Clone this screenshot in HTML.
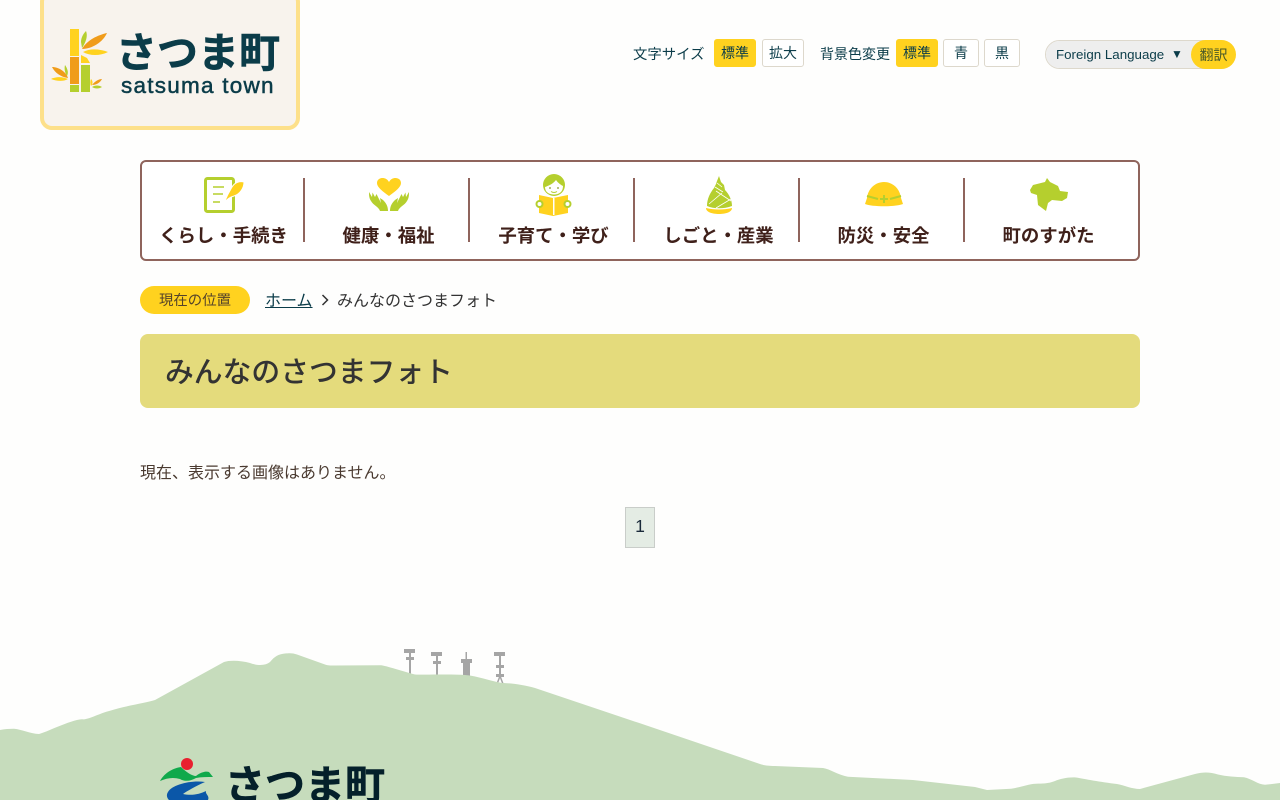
<!DOCTYPE html>
<html lang="ja"><head><meta charset="utf-8"><title>みんなのさつまフォト</title>
<style>
html,body{margin:0;padding:0;width:1280px;height:800px;overflow:hidden}
body{position:relative;background:#fefefd;font-family:"Liberation Sans","Noto Sans CJK JP",sans-serif;color:#333}
#w{position:absolute;left:0;top:0;width:1280px;height:800px;overflow:hidden}
.a{position:absolute;white-space:nowrap}
.c{text-align:center}
.btn{position:absolute;box-sizing:border-box;height:28px;top:39px;border-radius:3px;font-size:14px;line-height:27px;text-align:center;color:#0b3c49;border:1px solid #ddd8cc;background:#fff}
.btn.on{background:#ffd21f;border-color:#ffd21f;color:#0b3c49}
.nl{position:absolute;top:222px;width:165px;text-align:center;font-size:18.4px;line-height:28px;font-weight:700;color:#3f201a;white-space:nowrap}
.dv{position:absolute;top:178px;width:2px;height:64px;background:#8f645c}
svg{position:absolute;left:0;top:0}
</style></head><body><div id="w">

<div class="a" style="left:40px;top:-10px;width:260px;height:140px;box-sizing:border-box;background:#f8f3ed;border:4px solid #fde08a;border-radius:12px"></div>
<div class="a" style="left:116px;top:25px;font-size:41px;line-height:56px;font-weight:700;color:#0b3c49;-webkit-text-stroke:.6px #0b3c49">さつま町</div>
<div class="a" style="left:121px;top:72px;font-size:22.5px;line-height:28px;letter-spacing:1.25px;color:#0b3c49;-webkit-text-stroke:.5px #0b3c49">satsuma town</div>

<div class="a" style="left:633px;top:45px;font-size:14.4px;line-height:20px;color:#0b3c49">文字サイズ</div>
<div class="btn on" style="left:714px;width:42px">標準</div>
<div class="btn" style="left:762px;width:42px">拡大</div>
<div class="a" style="left:820px;top:44px;font-size:14px;line-height:20px;color:#0b3c49">背景色変更</div>
<div class="btn on" style="left:896px;width:42px">標準</div>
<div class="btn" style="left:943px;width:36px">青</div>
<div class="btn" style="left:984px;width:36px">黒</div>
<div class="a" style="left:1045px;top:40px;width:190px;height:29px;box-sizing:border-box;border:1px solid #ddd8cc;border-radius:15px;background:#fff"></div>
<div class="a" style="left:1046px;top:41px;width:165px;height:27px;border-radius:14px;background:#eee"></div>
<div class="a" style="left:1056px;top:45px;font-size:13.33px;line-height:19px;color:#0b3c49">Foreign Language</div>
<div class="a" style="left:1171px;top:45px;font-size:12px;line-height:19px;color:#0b3c49">▼</div>
<div class="a c" style="left:1191px;top:40px;width:45px;height:29px;border-radius:15px;background:#ffd21f;font-size:14px;line-height:31px;color:#4b5a28">翻訳</div>

<div class="a" style="left:140px;top:160px;width:1000px;height:101px;box-sizing:border-box;border:2px solid #8f645c;border-radius:6px;background:#fff"></div>
<div class="dv" style="left:303px"></div><div class="dv" style="left:468px"></div><div class="dv" style="left:633px"></div><div class="dv" style="left:798px"></div><div class="dv" style="left:963px"></div>
<div class="nl" style="left:141px">くらし・手続き</div>
<div class="nl" style="left:306px">健康・福祉</div>
<div class="nl" style="left:471px">子育て・学び</div>
<div class="nl" style="left:636px">しごと・産業</div>
<div class="nl" style="left:801px">防災・安全</div>
<div class="nl" style="left:966px">町のすがた</div>

<svg width="1280" height="800" viewBox="0 0 1280 800">
<!-- logo bamboo -->
<rect x="70" y="29" width="9" height="27" fill="#ffd21f"/>
<rect x="70" y="57" width="9" height="27" fill="#f09c1a"/>
<rect x="70" y="85" width="9" height="7" fill="#b5cf2e"/>
<path d="M81 55 L87 58 L90 63 L81 63Z" fill="#ffd21f"/>
<rect x="81" y="65" width="9" height="27" fill="#b5cf2e"/>
<path d="M81 42 C81 37 84 33 86 31 C88 36 86 42 82 48Z" fill="#b5cf2e"/>
<path d="M82 49 C87 40 98 35 107 33 C103 42 92 49 82 49Z" fill="#f09c1a"/>
<path d="M83 52 C90 48 100 49 108 52 C100 56 90 56 83 52Z" fill="#ffd21f"/>
<path d="M52 67 C59 67 66 72 68 78 C61 77 55 73 52 67Z" fill="#f09c1a"/>
<path d="M65 65 C67 68 69 72 67 76 C65 73 64 69 65 65Z" fill="#b5cf2e"/>
<path d="M51 79 C57 76 63 77 68 79 C63 82 56 81 51 79Z" fill="#ffd21f"/>
<path d="M92 85 C95 81 99 79 102 79 C100 83 96 85 92 85Z" fill="#f09c1a"/>
<path d="M91 79 C93 81 93 84 91 86 C90 84 90 81 91 79Z" fill="#ffd21f"/>
<path d="M92 87 C95 85 99 85 102 87 C99 89 95 89 92 87Z" fill="#b5cf2e"/>

<!-- nav icon 1 -->
<rect x="205.500" y="178.500" width="28" height="33" rx="2" fill="#fff" stroke="#b5cf2e" stroke-width="3"/>
<path d="M213 187h11M213 194h10M213 202h7" stroke="#b5cf2e" stroke-width="1.500" fill="none"/>
<path d="M244 182 C240 181 235 182 232 187 C229 192 226 198 224 203 C227 199 230 197 234 196 C240 194 244 188 244 182Z" fill="#ffd21f" stroke="#fff" stroke-width="1"/>

<!-- nav icon 2 -->
<path d="M389 196 C382 191 377 187 377 183 C377 177 386 176 389 182 C392 176 401 177 401 183 C401 187 396 191 389 196Z" fill="#ffd21f"/>
<path d="M369 192 L372 197 L372.500 192.500 L375 197 L376.500 194 L379 199 L381 203 L380 198 L383 200 C386 203 388 206 388 211 L380 211 C379 207 373 205 371 201 C369 198 369 195 369 192Z" fill="#b5cf2e"/>
<path d="M409 192 L406 197 L405.500 192.500 L403 197 L401.500 194 L399 199 L397 203 L398 198 L395 200 C392 203 390 206 390 211 L398 211 C399 207 405 205 407 201 C409 198 409 195 409 192Z" fill="#b5cf2e"/>

<!-- nav icon 3 -->
<circle cx="554" cy="185" r="11" fill="#b5cf2e"/>
<path d="M545 187 C548 186 553 184 556 180 C558 183 561 185 563 186 C563 192 559 194.500 554 194.500 C549 194.500 545 192 545 187Z" fill="#fff"/>
<circle cx="550" cy="188" r=".9" fill="#8a9a20"/><circle cx="558" cy="188" r=".9" fill="#8a9a20"/>
<path d="M551 191.500 Q554 193.500 557 191.500" stroke="#b5cf2e" fill="none"/>
<path d="M539 195 L553 198 L568 195 L568 213 L553 216 L539 213Z" fill="#ffd21f"/>
<rect x="553" y="198" width="1.500" height="17" fill="#fff"/>
<circle cx="539.500" cy="204" r="3" fill="#fff" stroke="#b5cf2e" stroke-width="2"/>
<circle cx="567.500" cy="204" r="3" fill="#fff" stroke="#b5cf2e" stroke-width="2"/>

<!-- nav icon 4 -->
<path d="M719 176 L721 182 L724 185 L725 190 C729 194 732 200 732 206 C724 209 714 209 707 206 C707 199 710 193 714 188 L716 184 L717 181Z" fill="#b5cf2e"/>
<path d="M706 208 C714 210 724 210 732 208 C732 212 726 214 719 214 C712 214 706 212 706 208Z" fill="#ffd21f"/>
<path d="M709 204 L722 193 M731 201 L716 191 M716 208 L731 199 M715 187 L723 192 M717 183 L722 187" stroke="#fff" stroke-width=".8" fill="none"/>

<!-- nav icon 5 -->
<path d="M867 198 C868 189 875 182 884 182 C893 182 900 189 901 198 L903 204 C896 207 872 207 865 204Z" fill="#ffd21f"/>
<path d="M867 196 L878 199 M890 199 L901 196 M880 199h8M884 195v8" stroke="#b5cf2e" stroke-width="2" fill="none"/>

<!-- nav icon 6 -->
<path d="M1030 190 L1033 185 L1045 182 L1047 178 L1050 182 L1058 186 L1060 191 L1068 192 L1067 198 L1062 201 L1052 200 L1048 203 L1046 211 L1038 205 L1037 195 L1031 193Z" fill="#b5cf2e"/>

<!-- towers -->
<g fill="#a5a5a5">
<rect x="404" y="649" width="11" height="4"/><rect x="406" y="657" width="8" height="3"/><rect x="409" y="649" width="2" height="25"/>
<rect x="431" y="652" width="11" height="4"/><rect x="433" y="661" width="8" height="3"/><rect x="436" y="652" width="2" height="24"/>
<rect x="461" y="659" width="11" height="4"/><rect x="465.500" y="652" width="1.500" height="10"/><rect x="463" y="662" width="7" height="15"/>
<rect x="494" y="652" width="11" height="4"/><rect x="496" y="665" width="8" height="3"/><rect x="496" y="674" width="8" height="3"/><rect x="499" y="652" width="2" height="25"/>
</g>
<path d="M500 676 L497 684 M500 676 L503 684" stroke="#a5a5a5" stroke-width="1.500" fill="none"/>

<!-- mountain -->
<path fill="#c6dcbc" d="M0 730 C5 729 9 728.700 14 728.700 C22 729.500 30 733.500 39 734 C45 733 70 720 82 719.300 C88 720 100 713 110 710.700 C125 706 145 703 155 700 L224 662 C230 660 241 660.500 250 663 C258 666 266 665.500 270 662 C275 656 278 654.500 285 653.500 C290 653 293 653 297 654.500 L325 664.500 C328 665.500 330 665.500 334 665.500 L381 665.300 C385 665.500 405 672 415 674.500 C425 675 450 674 465 675 C478 676 490 681 502 683 C510 683 525 685 535 688 L640 723.300 L760 764 C765 765.500 768 765.800 775 766 L823 768 C830 769 838 775 848 776.700 L913 780 L975 787 L987 790 L1011 788.700 C1020 787.500 1028 784 1036 783.700 C1042 783.500 1048 783.800 1055 781 C1060 779 1068 777 1076 777.500 C1085 779 1100 782 1117 784 C1125 785.500 1132 789 1140 789 L1195 774 C1203 772 1210 772 1218 774.500 C1226 776.500 1236 777 1244 777.300 C1252 779 1258 784.500 1265 784.800 L1280 783 L1280 800 L0 800Z"/>

<!-- footer logo -->
<circle cx="187" cy="764" r="6" fill="#e8202f"/>
<path d="M160 781 C165 772 174 768 181 767 C186 772 192 776 196 776 C201 772 206 771 209 772 L213 777 C207 777 201 777 196 778 C191 781 185 782 180 779 C173 777 167 778 160 781Z" fill="#10a94b"/>
<path d="M205 782 C190 780 172 785 168 792 C166 795 167 798 169 800 L208 800 C210 796 205 794 206 791 C200 794 192 796 183 794 C187 791 196 786 205 782Z" fill="#0b57a8"/>
</svg>
<div class="a" style="left:225px;top:758px;font-size:40px;line-height:56px;font-weight:700;color:#04202a;-webkit-text-stroke:.6px #04202a">さつま町</div>

<div class="a c" style="left:140px;top:286px;width:110px;height:28px;border-radius:14px;background:#ffd21f;font-size:14.4px;line-height:31px;color:#54432a">現在の位置</div>
<div class="a" style="left:265px;top:290px;font-size:16px;line-height:24px;color:#0b3c49;text-decoration:underline">ホーム</div>
<svg width="1280" height="800" viewBox="0 0 1280 800" style="pointer-events:none"><path d="M322.500 295 L327.500 300 L322.500 305" fill="none" stroke="#333" stroke-width="1.500"/></svg>
<div class="a" style="left:337px;top:290px;font-size:16px;line-height:24px;color:#333">みんなのさつまフォト</div>

<div class="a" style="left:140px;top:334px;width:1000px;height:74px;border-radius:8px;background:#e4db7c"></div>
<div class="a" style="left:165px;top:352px;font-size:28.8px;line-height:42px;font-weight:500;color:#333">みんなのさつまフォト</div>

<div class="a" style="left:140px;top:462px;font-size:16px;line-height:24px;color:#4a3a30">現在、表示する画像はありません。</div>
<div class="a c" style="left:625px;top:507px;width:30px;height:41px;box-sizing:border-box;background:#e4ece4;border:1px solid #c9cdc9;font-size:17.6px;line-height:37px;color:#1a2a3a">1</div>
</div></body></html>
